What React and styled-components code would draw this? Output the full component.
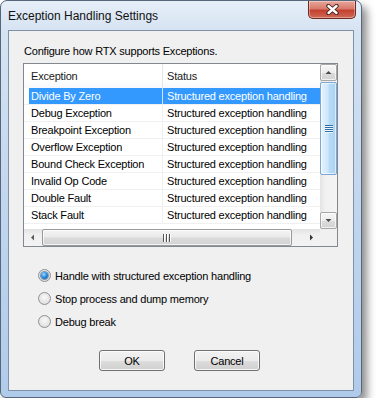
import React from "react";
import styled, { createGlobalStyle, css } from "styled-components";

const GlobalStyle = createGlobalStyle`
  html, body { margin: 0; padding: 0; background: #ffffff; }
  body { font-family: "Liberation Sans", Arial, sans-serif; font-size: 11px; color: #000; letter-spacing: -0.2px; }
  * { box-sizing: border-box; }
`;

const Window = styled.div`
  width: 362px;
  height: 398px;
  border: 1px solid #56677c;
  border-radius: 7px 7px 6px 6px;
  background: linear-gradient(to bottom, #e6eef8 0px, #d6e3f2 30px, #c2d6ee 200px, #b0cbea 100%);
  box-shadow: 5px 6px 9px rgba(0, 0, 0, 0.45);
  display: flex;
  flex-direction: column;
  padding: 0 7px 6px 7px;
`;

const TitleBar = styled.div`
  height: 29px;
  display: flex;
  align-items: center;
  position: relative;
  margin: 0 -7px;
  padding-left: 7px;
`;

const Title = styled.span`
  font-family: "Liberation Sans", Arial, sans-serif;
  font-size: 12px;
  letter-spacing: 0;
  color: #111;
`;

const CloseButton = styled.div`
  position: absolute;
  top: 0;
  right: 5px;
  width: 48px;
  height: 18px;
  border: 1px solid #6b2a22;
  border-top: none;
  border-radius: 0 0 5px 5px;
  background: linear-gradient(to bottom, #e9a79c 0%, #d77a6c 45%, #c3402f 55%, #cf6a56 100%);
  box-shadow: inset 0 0 0 1px rgba(255, 255, 255, 0.35);
  display: flex;
  align-items: center;
  justify-content: center;
`;

const Client = styled.div`
  flex: 1;
  border: 1px solid #7f91a8;
  background: #f0f0f0;
  display: flex;
  flex-direction: column;
  padding: 14px 16px 0 14px;
`;

const Prompt = styled.div`
  height: 13px;
  line-height: 13px;
  padding-left: 1px;
`;

const ListView = styled.div`
  margin-top: 5px;
  width: 315px;
  height: 184px;
  border: 1px solid #828790;
  background: #ffffff;
  display: grid;
  grid-template-columns: 296px 17px;
  grid-template-rows: 165px 17px;
`;

const ListMain = styled.div`
  overflow: hidden;
  display: flex;
  flex-direction: column;
`;

const Header = styled.div`
  height: 24px;
  display: grid;
  grid-template-columns: 139px 1fr;
  background: linear-gradient(to bottom, #ffffff 0%, #ffffff 60%, #f7f8fa 100%);
`;

const HeaderCell = styled.div`
  display: flex;
  align-items: center;
  padding-left: ${(p) => (p.$first ? 7 : 4)}px;
  border-right: ${(p) => (p.$first ? "1px solid #e3e5e8" : "none")};
  color: #1a1a1a;
`;

const Row = styled.div`
  height: 17px;
  display: grid;
  grid-template-columns: 139px 1fr;
  border-bottom: 1px solid #f0f0f0;
`;

const Cell = styled.div`
  line-height: 16px;
  white-space: nowrap;
  overflow: hidden;
  margin-left: ${(p) => (p.$first ? 5 : 0)}px;
  padding-left: ${(p) => (p.$first ? 2 : 4)}px;
  border-right: ${(p) => (p.$first ? "1px solid #f0f0f0" : "none")};
  ${(p) =>
    p.$selected &&
    css`
      background: #3399ff;
      color: #ffffff;
      border-right-color: #cfe5ff;
    `}
`;

const VScroll = styled.div`
  display: flex;
  flex-direction: column;
  background: linear-gradient(to right, #e3e3e3 0%, #f1f1f1 30%, #f4f4f4 100%);
`;

const ScrollButton = styled.div`
  width: 17px;
  height: 17px;
  border: 1px solid #a7a7a7;
  border-radius: 2px;
  background: linear-gradient(to bottom, #f7f7f7 0%, #ececec 50%, #dcdcdc 51%, #d2d2d2 100%);
  box-shadow: inset 0 0 0 1px rgba(255, 255, 255, 0.7);
  display: flex;
  align-items: center;
  justify-content: center;
`;

const VTrack = styled.div`
  flex: 1;
  padding-top: 1px;
`;

const VThumb = styled.div`
  height: 93px;
  border: 1px solid #7ba7d1;
  border-radius: 2px;
  background: linear-gradient(to right, #e6f3fc 0%, #cfe7f9 45%, #b7dbf6 55%, #a9d3f3 100%);
  box-shadow: inset 0 0 0 1px rgba(255, 255, 255, 0.6);
  display: flex;
  align-items: center;
  justify-content: center;
`;

const HScroll = styled.div`
  display: flex;
  align-items: stretch;
  background: linear-gradient(to bottom, #e2e2e2 0%, #f0f0f0 35%, #f3f3f3 100%);
`;

const HArrow = styled.div`
  width: 17px;
  display: flex;
  align-items: center;
  justify-content: center;
`;

const HTrack = styled.div`
  flex: 1;
  display: flex;
  padding: 0 11px 0 1px;
`;

const HThumb = styled.div`
  flex: 1;
  border: 1px solid #9a9a9a;
  border-radius: 2px;
  background: linear-gradient(to bottom, #f5f5f5 0%, #eaeaea 45%, #dadada 55%, #d3d3d3 100%);
  box-shadow: inset 0 0 0 1px rgba(255, 255, 255, 0.7);
  display: flex;
  align-items: center;
  justify-content: center;
`;

const Corner = styled.div`
  background: #f0f0f0;
`;

const RadioGroup = styled.div`
  margin-top: 17px;
  padding-left: 15px;
  display: flex;
  flex-direction: column;
`;

const RadioRow = styled.label`
  height: 23px;
  display: flex;
  align-items: center;
`;

const RadioCircle = styled.span`
  width: 13px;
  height: 13px;
  border-radius: 50%;
  border: 1px solid #8d9095;
  background: radial-gradient(circle at 50% 40%, #f9f9f9 0%, #e8e8e8 50%, #d4d4d4 100%);
  display: flex;
  align-items: center;
  justify-content: center;
  flex: none;
`;

const RadioDot = styled.span`
  width: 7px;
  height: 7px;
  border-radius: 50%;
  background: radial-gradient(circle at 40% 35%, #9fdcff 0%, #2a8ee0 45%, #0d4f92 100%);
  box-shadow: 0 0 0 1px rgba(30, 70, 120, 0.5);
`;

const RadioLabel = styled.span`
  margin-left: 4px;
`;

const ButtonRow = styled.div`
  margin-top: 17px;
  display: flex;
  gap: 29px;
  padding-left: 76px;
`;

const PushButton = styled.div`
  width: 66px;
  height: 21px;
  border: 1px solid #707070;
  border-radius: 3px;
  background: linear-gradient(to bottom, #f2f2f2 0%, #ebebeb 50%, #dddddd 51%, #cfcfcf 100%);
  box-shadow: inset 0 0 0 1px rgba(255, 255, 255, 0.8);
  display: flex;
  align-items: center;
  justify-content: center;
  color: #000;
`;

const CloseGlyph = () => (
  <svg width="13" height="11" viewBox="0 0 13 11">
    <path d="M2.5 2 L10.5 9 M10.5 2 L2.5 9" stroke="#3a1e1a" strokeWidth="4.2" strokeLinecap="round" />
    <path d="M2.5 2 L10.5 9 M10.5 2 L2.5 9" stroke="#ffffff" strokeWidth="2.4" strokeLinecap="round" />
  </svg>
);

const Arrow = ({ dir, color = "#4a4a4a" }) => {
  const pts = {
    up: "0.5,4 3.5,1 6.5,4",
    down: "0.5,1 3.5,4 6.5,1",
    left: "4,0.5 1,3.5 4,6.5",
    right: "1,0.5 4,3.5 1,6.5",
  }[dir];
  const vertical = dir === "up" || dir === "down";
  return (
    <svg width={vertical ? 7 : 5} height={vertical ? 5 : 7} viewBox={vertical ? "0 0 7 5" : "0 0 5 7"}>
      <polygon points={pts} fill={color} />
    </svg>
  );
};

const VGrip = () => (
  <svg width="8" height="8" viewBox="0 0 8 8">
    {[0, 2, 4, 6].map((y) => (
      <g key={y}>
        <rect x="0" y={y} width="8" height="1" fill="#2f6ea8" />
        <rect x="0" y={y + 1} width="8" height="1" fill="#eef7fd" />
      </g>
    ))}
  </svg>
);

const HGrip = () => (
  <svg width="8" height="8" viewBox="0 0 8 8">
    {[0, 3, 6].map((x) => (
      <g key={x}>
        <rect x={x} y="0" width="1" height="8" fill="#555555" />
        <rect x={x + 1} y="0" width="1" height="8" fill="#ffffff" />
      </g>
    ))}
  </svg>
);

const items = [
  "Divide By Zero",
  "Debug Exception",
  "Breakpoint Exception",
  "Overflow Exception",
  "Bound Check Exception",
  "Invalid Op Code",
  "Double Fault",
  "Stack Fault",
];

const options = [
  "Handle with structured exception handling",
  "Stop process and dump memory",
  "Debug break",
];

export default function App() {
  return (
    <>
      <GlobalStyle />
      <Window>
        <TitleBar>
          <Title>Exception Handling Settings</Title>
          <CloseButton>
            <CloseGlyph />
          </CloseButton>
        </TitleBar>
        <Client>
          <Prompt>Configure how RTX supports Exceptions.</Prompt>
          <ListView>
            <ListMain>
              <Header>
                <HeaderCell $first>Exception</HeaderCell>
                <HeaderCell>Status</HeaderCell>
              </Header>
              {items.map((name, i) => (
                <Row key={name}>
                  <Cell $first $selected={i === 0}>{name}</Cell>
                  <Cell $selected={i === 0}>Structured exception handling</Cell>
                </Row>
              ))}
            </ListMain>
            <VScroll>
              <ScrollButton>
                <Arrow dir="up" />
              </ScrollButton>
              <VTrack>
                <VThumb>
                  <VGrip />
                </VThumb>
              </VTrack>
              <ScrollButton>
                <Arrow dir="down" />
              </ScrollButton>
            </VScroll>
            <HScroll>
              <HArrow>
                <Arrow dir="left" color="#5a5a5a" />
              </HArrow>
              <HTrack>
                <HThumb>
                  <HGrip />
                </HThumb>
              </HTrack>
              <HArrow>
                <Arrow dir="right" color="#333333" />
              </HArrow>
            </HScroll>
            <Corner />
          </ListView>
          <RadioGroup>
            {options.map((o, i) => (
              <RadioRow key={o}>
                <RadioCircle>{i === 0 && <RadioDot />}</RadioCircle>
                <RadioLabel>{o}</RadioLabel>
              </RadioRow>
            ))}
          </RadioGroup>
          <ButtonRow>
            <PushButton>OK</PushButton>
            <PushButton>Cancel</PushButton>
          </ButtonRow>
        </Client>
      </Window>
    </>
  );
}
